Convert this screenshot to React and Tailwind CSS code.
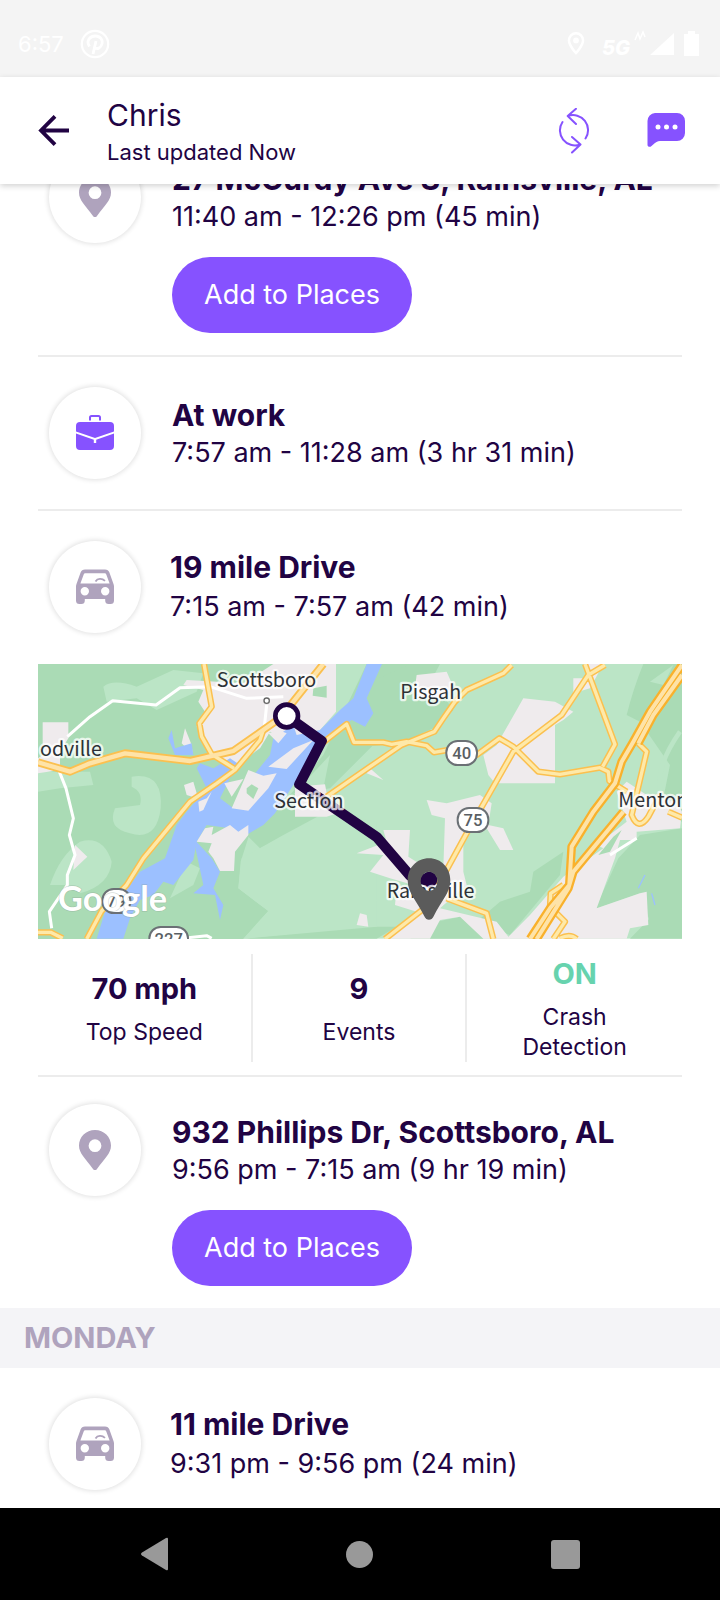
const timeline = [
  {
    type: "place",
    title: "27 McCurdy Ave S, Rainsville, AL",
    time: "11:40 am - 12:26 pm (45 min)",
    canAdd: true,
  },
  {
    type: "work",
    title: "At work",
    time: "7:57 am - 11:28 am (3 hr 31 min)",
  },
  {
    type: "drive",
    title: "19 mile Drive",
    time: "7:15 am - 7:57 am (42 min)",
    trip: true,
  },
  {
    type: "place",
    title: "932 Phillips Dr, Scottsboro, AL",
    time: "9:56 pm - 7:15 am (9 hr 19 min)",
    canAdd: true,
  },
];

const mondayDrive = {
  title: "11 mile Drive",
  time: "9:31 pm - 9:56 pm (24 min)",
};

const tripStats = [
  { value: "70 mph", lines: ["Top Speed"] },
  { value: "9", lines: ["Events"] },
  { value: "ON", lines: ["Crash", "Detection"], active: true },
];

function PinIcon() {
  return (
    <svg width="34" height="40" viewBox="0 0 34 40" fill="#afa3bd" aria-hidden="true">
      <path
        fillRule="evenodd"
        d="M17 0C8 0 1 7 1 15.5c0 8 6.5 13 14 23.5a2.400 2.400 0 0 0 4 0C26.5 28.5 33 23.5 33 15.5 33 7 26 0 17 0Zm0 9.300a6.400 6.400 0 1 1 0 12.800 6.400 6.400 0 0 1 0-12.800Z"
      />
    </svg>
  );
}

function BriefcaseIcon() {
  return (
    <svg width="38" height="36" viewBox="0 0 38 36" aria-hidden="true">
      <path
        d="M14 5.500V2.500C14 1.500 14.500 1 15.500 1h7c1 0 1.500.5 1.500 1.500v3"
        fill="none"
        stroke="#8652ff"
        strokeWidth="2"
      />
      <path fill="#8652ff" d="M4 7h30a4 4 0 0 1 4 4v5.500L19 23 0 16.500V11a4 4 0 0 1 4-4Z" />
      <path
        fill="#8652ff"
        d="M0 18.500l17.800 6.200V28h2.400v-3.300L38 18.500V31a4 4 0 0 1-4 4H4a4 4 0 0 1-4-4Z"
      />
    </svg>
  );
}

function CarIcon() {
  return (
    <svg width="38" height="36" viewBox="0 0 38 36" aria-hidden="true">
      <path
        fill="#afa3bd"
        fillRule="evenodd"
        d="M9 .5h20c2.200 0 3.700 1.100 4.400 3.100L37.500 15c.3.800.5 1.600.5 2.500V31.500a3.500 3.500 0 0 1-3.500 3.500h-1.800a3.500 3.500 0 0 1-3.500-3.500V30H8.800v1.500A3.500 3.500 0 0 1 5.300 35H3.500A3.500 3.500 0 0 1 0 31.500V17.500c0-.9.200-1.700.500-2.500L4.600 3.600C5.300 1.600 6.800.5 9 .5Zm.6 3.700c-1 0-1.600.4-1.900 1.300L4.400 14.600h29.200L30.300 5.500c-.3-.9-.9-1.300-1.900-1.300ZM8.800 18a4.200 4.200 0 1 0 0 8.400 4.200 4.200 0 0 0 0-8.400Zm20.400 0a4.200 4.200 0 1 0 0 8.400 4.200 4.200 0 0 0 0-8.400Z"
      />
      <path d="M19.500 12.500c2-3.200 6.500-3.400 9.500-.6" fill="none" stroke="#afa3bd" strokeWidth="1.800" />
    </svg>
  );
}

const icons = {
  place: PinIcon,
  work: BriefcaseIcon,
  drive: CarIcon,
};

function IconBadge({ type }) {
  const Icon = icons[type];
  return (
    <div className="w-[92px] h-[92px] shrink-0 rounded-full bg-white flex items-center justify-center shadow-[0_0_5px_1px_rgba(0,0,0,0.12)]">
      <Icon />
    </div>
  );
}

function StatusBar() {
  return (
    <div className="h-[77px] shrink-0 bg-[#f4f4f4] pt-2.5 px-[18px] flex items-center justify-between text-white">
      <div className="flex items-center gap-4">
        <span className="text-[22px] leading-7">6:57</span>
        <svg width="30" height="30" viewBox="0 0 30 30" fill="none" stroke="#fff" aria-hidden="true">
          <circle cx="15" cy="15" r="13.200" strokeWidth="2.200" />
          <path d="M13 25l3-13M9.500 17.500C6 12 9.500 7 15.200 7c5 0 7.800 3.600 6.800 7.800-1 4.400-5 6-7.500 3.400" strokeWidth="2.800" />
        </svg>
      </div>
      <svg width="136" height="28" viewBox="0 0 136 28" fill="#fff" className="overflow-visible" aria-hidden="true">
        <path
          fillRule="evenodd"
          d="M10 2a8.300 8.300 0 0 0-8.300 8.300C1.700 16.500 10 25 10 25s8.300-8.500 8.300-14.700A8.300 8.300 0 0 0 10 2Zm0 2.500a5.800 5.800 0 0 1 5.800 5.800c0 3.200-3.400 8-5.800 11-2.400-3-5.800-7.800-5.800-11A5.800 5.800 0 0 1 10 4.500Zm0 3a2.900 2.900 0 1 0 0 5.800 2.900 2.900 0 0 0 0-5.800Z"
        />
        <text x="36" y="25" fontSize="20" fontWeight="800" fontStyle="italic">
          5G
        </text>
        <path d="M69 10l3-7 2 6 3-7 2 5" fill="none" stroke="#fff" strokeWidth="1.500" />
        <path d="M108 3v22H84ZM118 4h4V1h7v3h4v22h-15Z" />
      </svg>
    </div>
  );
}

function Header() {
  return (
    <header className="relative z-10 h-[107px] shrink-0 bg-white pl-[38px] pr-[34px] flex items-center shadow-[0_2px_6px_rgba(0,0,0,0.18)]">
      <button type="button" aria-label="Back" className="w-[69px] h-12 flex items-center">
        <svg width="32" height="32" viewBox="0 0 32 32" fill="none" stroke="#210343" strokeWidth="3.800" aria-hidden="true">
          <path d="M31 15.500H4M17 1.300L3 15.500l14 14.200" />
        </svg>
      </button>
      <div className="flex-1 min-w-0 pt-0.5">
        <h1 className="text-[30px] leading-10">Chris</h1>
        <p className="text-[22px] leading-[34px]">Last updated Now</p>
      </div>
      <button type="button" aria-label="Refresh" className="mr-14">
        <svg
          width="34"
          height="46"
          viewBox="0 0 34 46"
          fill="none"
          stroke="#8652ff"
          strokeWidth="2"
          strokeLinecap="round"
          strokeLinejoin="round"
          aria-hidden="true"
        >
          <path d="M6.500 14A15 15 0 0 0 24 36.500M16 29l8.500 7.500-8.500 8M29.500 30.500A15 15 0 0 0 12 8M20 .8L11.700 8l8.300 8" />
        </svg>
      </button>
      <button type="button" aria-label="Messages">
        <svg width="40" height="36" viewBox="0 0 40 36" aria-hidden="true">
          <path
            fill="#8652ff"
            d="M9 0h22a8 8 0 0 1 8 8v12a8 8 0 0 1-8 8H14c-2.500 0-4.500 1.500-6.500 3.300L5.500 33c-1.500 1.500-4 1-4-1.300V8A8 8 0 0 1 9 0Z"
          />
          <circle cx="12" cy="14" r="2.500" fill="#fff" />
          <circle cx="20.500" cy="14" r="2.500" fill="#fff" />
          <circle cx="29" cy="14" r="2.500" fill="#fff" />
        </svg>
      </button>
    </header>
  );
}

const mainRoads = [
  // north road into Scottsboro
  "M522 27L545 155 508 205 515 245 545 298 612 340",
  // south-west along the river
  "M170 852L215 768 290 690 340 610 480 440 560 385 615 345 690 255 700 225",
  "M24 832H62L98 850",
  // east of the river
  "M870 270L950 207 972 262H1060L1085 268 1130 260 1190 272 1212 292 1260 284 1340 300 1408 250 1450 275 1525 350 1590 358 1710 338 1735 350 1738 378 1790 410",
  "M890 425L1020 335 1115 270 1213 230 1240 190 1275 140 1310 105 1420 55 1445 30",
  "M1065 852L1180 762M1250 730L1370 775 1390 852M1225 690L1310 535 1450 290 1595 180 1675 60 1725 30",
  "M1665 27L1755 268 1718 335",
  "M1825 265L1850 290 1805 480Q1825 530 1855 485L1890 420M1915 470L1956 488",
  "M1560 755L1562 715 1600 690M1575 770L1605 800 1570 852M1590 850Q1620 835 1640 852",
];

const westHighway =
  "M24 322L120 350 180 325 285 295 480 318 550 302 610 288 690 232 750 190 880 27";

const highways = [
  "M1956 30L1860 170 1810 260 1775 320 1755 385 1690 470 1625 575 1618 690 1560 760 1500 852",
  "M1956 60L1870 180 1825 265",
  "M1780 470L1630 650 1615 700 1520 852",
];

const whiteRoads = [
  "M112 245L180 185 248 137 378 150 450 98 540 95 650 130 760 125M710 150L702 225",
  "M88 350L108 400 130 490 118 540 135 600 112 660V690L58 770 65 820",
  "M1740 600L1820 550M440 852L530 842 545 850",
];

const mapLabels = [
  { name: "Scottsboro", x: 560, y: 97 },
  { name: "odville", x: 30, y: 304 },
  { name: "Section", x: 733, y: 460 },
  { name: "Pisgah", x: 1111, y: 132 },
  { name: "Mentone", x: 1765, y: 457 },
  { name: "Rainsville", x: 1070, y: 730 },
];

const shields = [
  { label: "40", x: 1295, y: 294, w: 92 },
  { label: "75", x: 1329, y: 495, w: 92 },
  { label: "79", x: 259, y: 738, w: 84 },
  { label: "227", x: 416, y: 852, w: 116 },
];

function TripMap() {
  return (
    <svg className="block w-full" viewBox="24 27 1932 824" role="img" aria-label="Route from Rainsville to Scottsboro">
      <rect x="24" y="27" width="1932" height="824" fill="#bbe5c6" />
      {/* forest */}
      <g fill="#aadbb5">
        <path d="M24 27H740V330L670 500 632 620 625 700 715 768 640 852H24ZM780 420L900 400 1180 120 1230 27H1010L880 300ZM760 450L900 300 860 500 690 580 650 540Z" />
        <path d="M980 250L1180 190 1210 220 1120 262 1010 275ZM1140 27H1170L1270 165 1220 220 1080 235 980 260V100Z" />
        <path d="M1840 27H1956V500L1890 480 1920 330 1830 200 1790 180Q1810 100 1840 27Z" />
        <path d="M1956 520V760L1860 800 1830 715 1695 762 1765 610 1830 540ZM1860 790L1956 730V851H1800Z" />
        <path d="M1600 590L1590 660 1440 840 1340 800 1410 740 1500 710 1510 650ZM1140 851L1220 800 1290 785 1350 815 1360 851ZM1000 815H1100L1040 851H640Z" />
      </g>
      {/* clearings */}
      <g fill="#bbe5c6">
        <path d="M220 95Q250 70 320 95L430 45 520 55 500 110 380 165 320 130 230 140Z" />
        <path d="M305 365Q400 350 392 460 380 560 300 535 230 520 255 460L330 450Q340 410 305 395Z" />
        <path d="M60 690Q90 600 150 560 220 540 245 620 240 690 150 715L110 690ZM24 350L180 350 190 390 90 400 24 410Z" />
        <path d="M470 620L510 640 490 690 420 730ZM1860 80L1930 30 1900 90Z" />
        <path d="M890 470L1040 500V815L640 851 715 768 625 700 635 610 760 540Z" />
      </g>
      <path d="M1950 230Q1880 330 1890 400L1800 560 1700 640" fill="none" stroke="#bbe5c6" strokeWidth="14" />
      {/* towns */}
      <g fill="#efebed">
        <path d="M730 27H918V170L870 225 850 270 790 250 720 230 690 280 620 330 560 310 535 280 500 215 525 170 505 140 520 105 460 90 470 75 640 85Z" />
        <path d="M38 202H115V250L90 290V345L24 355V310L38 300ZM135 570L172 605 130 645ZM465 220L485 270 488 300 455 265Z" />
        <path d="M462 390L490 380 500 415 545 410 520 465 505 470 500 430 470 420ZM795 395L885 388 890 415 935 470 890 485H795Z" />
        <path d="M1160 60L1250 50 1270 95 1240 130H1150ZM1400 270L1480 130 1575 140 1630 170 1600 195 1575 210V385H1395L1375 360 1360 300ZM1630 70H1670V27H1720L1680 100 1630 115Z" />
        <path d="M1190 435L1250 445 1350 420 1385 445 1375 510 1420 520 1450 585H1410L1370 520 1300 540 1300 650 1310 690 1230 760 1400 800 1440 851H1360L1290 785 1230 795 1200 851H1060L1160 770 1095 750 1100 700 1190 690 1240 640 1245 490 1205 480Z" />
        <path d="M980 595L1070 560 1060 525H1140L1135 605 1190 640 1150 690 1080 670 1020 650 1060 600ZM1020 340L1060 375 1010 355ZM980 810L990 775 1010 780 1015 815Z" />
        <path d="M1790 380L1850 420 1940 440 1956 470 1950 520 1820 530V555H1770L1755 610 1700 760 1830 715 1850 710 1855 810 1800 820 1790 851H1430L1500 780 1600 665 1720 580 1700 570 1790 500 1760 410Z" />
      </g>
      <path d="M850 100L890 92V128L848 122ZM1775 525L1740 590 1705 600 1750 545Z" fill="#aadbb5" />
      {/* river and inlets */}
      <g fill="#9cc0ff">
        <path d="M1056 27L1010 130 1030 175 1005 215 965 195 900 240 850 310 790 390 735 475 700 510 640 545 600 520 530 510 500 560 490 615 430 690 400 680 370 720 330 735 300 790 280 851H200L225 770 300 690 330 650 405 610 440 510 470 470 530 400 500 340 510 325 550 340 600 310 630 330 600 370 570 430 610 460 655 380 720 300 730 250 790 210 800 240 870 225 930 165 970 130 1010 27Z" />
        <path d="M425 225L435 280 485 265 490 300 435 300 415 250ZM490 550L545 610 570 650 550 700 580 750 570 795 555 720 490 715 520 690Z" />
      </g>
      <g fill="#efebed">
        <path d="M505 440L530 430 545 410 520 465 508 470ZM583 385L640 372 605 425ZM605 460L655 345 700 362 740 355 715 400 655 467ZM715 335L790 280 850 255 770 342ZM715 235L745 265 770 235 745 225Z" />
        <path d="M500 560L525 520 550 515 545 540 600 510 625 530 655 510V540L615 590 612 648H570L550 610 535 590 545 565Z" />
      </g>
      <path d="M650 400L665 388 685 400 670 432 650 415Z" fill="#aadbb5" />
      <path d="M1825 700L1845 660M1865 715L1875 750" stroke="#9cc0ff" strokeWidth="4" fill="none" />
      {/* roads */}
      <g fill="none" strokeLinejoin="round">
        <path d={whiteRoads.join("")} stroke="#fff" strokeWidth="9" />
        <path d={mainRoads.join("")} stroke="#fbc04f" strokeWidth="19" />
        <path d={westHighway} stroke="#fbc04f" strokeWidth="24" />
        <path d={mainRoads.join("")} stroke="#fee9a9" strokeWidth="10" />
        <path d={westHighway} stroke="#fee3a8" strokeWidth="13" />
        <path d={highways.join("")} stroke="#f9b12c" strokeWidth="26" />
        <path d={highways.join("")} stroke="#fee3a8" strokeWidth="12" />
      </g>
      {/* route */}
      <path
        d="M770 183L875 258 808 388 1040 546 1140 662 1195 678"
        fill="none"
        stroke="#210343"
        strokeWidth="31"
        strokeLinejoin="round"
      />
      <circle cx="1198" cy="674" r="24" fill="#210343" />
      <circle cx="770" cy="183" r="34" fill="#fff" stroke="#210343" strokeWidth="14" />
      <circle cx="710" cy="137" r="8" fill="#fff" stroke="#666" strokeWidth="4" />
      {shields.map((s) => (
        <g key={s.label}>
          <rect
            x={s.x - s.w / 2}
            y={s.y - 36}
            width={s.w}
            height="72"
            rx="34"
            fill="#fff"
            stroke="#6b7075"
            strokeWidth="6"
          />
          <text
            x={s.x}
            y={s.y + 17}
            textAnchor="middle"
            fontSize="50"
            fontWeight="500"
            fill="#5a5f64"
            className="font-[Roboto]"
          >
            {s.label}
          </text>
        </g>
      ))}
      <g
        fill="#2d3136"
        fontSize="59"
        stroke="#fff"
        strokeOpacity="0.75"
        strokeWidth="14"
        strokeLinejoin="round"
        className="font-['Noto_Sans_CJK_SC','Noto_Sans',sans-serif] [paint-order:stroke]"
      >
        {mapLabels.map((l) => (
          <text key={l.name} x={l.x} y={l.y}>
            {l.name}
          </text>
        ))}
      </g>
      {/* end pin */}
      <path
        fill="#5b5b5b"
        fillRule="evenodd"
        d="M1197 610c-37 0-64 29-64 66 0 40 30 65 50 108 6 14 22 14 28 0 20-43 50-68 50-108 0-37-27-66-64-66Zm0 40a25 29 0 1 1 0 58 25 29 0 0 1 0-58Z"
      />
      <text
        x="84"
        y="767"
        fontSize="103"
        fontWeight="700"
        fill="#fff"
        stroke="#8a9a90"
        strokeOpacity="0.35"
        strokeWidth="4"
        className="font-[Lato] [paint-order:stroke]"
      >
        Google
      </text>
    </svg>
  );
}

function TripStats() {
  return (
    <dl className="grid grid-cols-3 pt-[15px] pb-[13px] divide-x-2 divide-[#ececec] text-center">
      {tripStats.map((s) => (
        <div key={s.value} className="pt-0.5 flex flex-col justify-center gap-2.5">
          <dt className="order-last text-[23px] leading-[30px]">
            {s.lines.map((line) => (
              <span key={line} className="block">
                {line}
              </span>
            ))}
          </dt>
          <dd
            className={
              s.active
                ? "text-[29px] leading-9 font-bold text-[#67d3ae]"
                : "text-[29px] leading-9 font-bold"
            }
          >
            {s.value}
          </dd>
        </div>
      ))}
    </dl>
  );
}

function PlaceItem({ item }) {
  return (
    <div className="flex gap-[31px] pl-[11px]">
      <IconBadge type={item.type} />
      <div className="min-w-0 pt-2.5">
        <h2 className="text-[30px] leading-9 font-bold whitespace-nowrap">{item.title}</h2>
        <p className="text-[27px] leading-10">{item.time}</p>
        {item.canAdd && (
          <button
            type="button"
            className="mt-5 h-[76px] px-8 rounded-full bg-[#8652ff] text-white text-[27px] leading-9"
          >
            Add to Places
          </button>
        )}
      </div>
    </div>
  );
}

function DriveItem({ item }) {
  return (
    <div className="flex items-center gap-[29px] pl-[11px]">
      <IconBadge type="drive" />
      <div className="min-w-0">
        <h2 className="text-[30px] leading-10 font-bold">{item.title}</h2>
        <p className="text-[27px] leading-10">{item.time}</p>
      </div>
    </div>
  );
}

function TimelineItem({ item }) {
  if (item.trip) {
    return (
      <li className="pt-[30px] border-b-2 border-[#ececec]">
        <DriveItem item={item} />
        <div className="mt-[31px]">
          <TripMap />
        </div>
        <TripStats />
      </li>
    );
  }
  return (
    <li
      className={
        item.canAdd
          ? "pt-[27px] pb-[22px] border-b-2 border-[#ececec] last:border-b-0"
          : "py-[30px] border-b-2 border-[#ececec]"
      }
    >
      <PlaceItem item={item} />
    </li>
  );
}

function NavBar() {
  return (
    <nav className="h-[92px] shrink-0 bg-black px-[52px] grid grid-cols-3 items-center justify-items-center">
      <button type="button" aria-label="Back">
        <svg width="30" height="34" viewBox="0 0 30 34" fill="#999" aria-hidden="true">
          <path d="M28 2v30q0 2-2 1L2 18.500q-2-1.500 0-3L26 1q2-1 2 1Z" />
        </svg>
      </button>
      <button type="button" aria-label="Home" className="w-[27px] h-[27px] rounded-full bg-[#999]" />
      <button type="button" aria-label="Recent apps" className="w-[29px] h-[29px] rounded-[3px] bg-[#999]" />
    </nav>
  );
}

export default function App() {
  return (
    <div className="h-screen flex flex-col overflow-hidden bg-white text-[#210343] font-[Inter,sans-serif]">
      <StatusBar />
      <Header />
      <main className="flex-1 min-h-0 overflow-hidden">
        {/* list is scrolled a little under the header */}
        <ul className="-mt-[60px] px-[38px]">
          {timeline.map((item) => (
            <TimelineItem key={item.title} item={item} />
          ))}
        </ul>
        <h2 className="bg-[#f4f4f7] px-6 py-3 text-[29px] leading-9 font-bold text-[#afa3bd]">
          MONDAY
        </h2>
        <div className="px-[38px] pt-[30px]">
          <DriveItem item={mondayDrive} />
        </div>
      </main>
      <NavBar />
    </div>
  );
}
